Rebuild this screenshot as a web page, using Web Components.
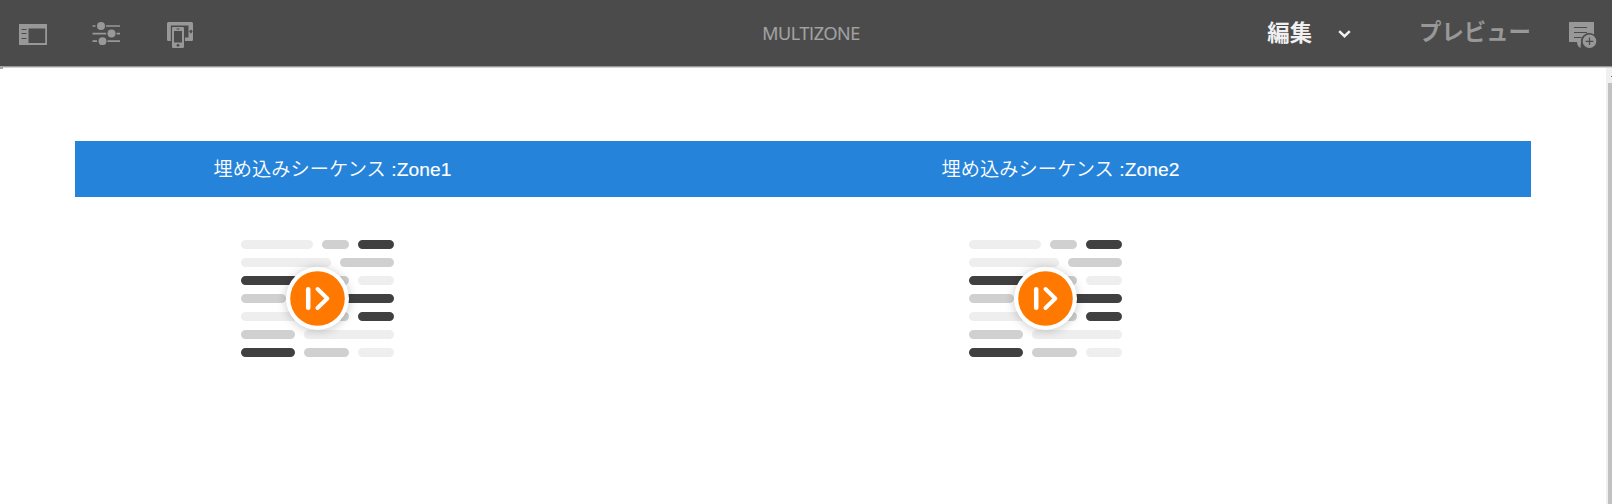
<!DOCTYPE html>
<html lang="ja">
<head>
<meta charset="utf-8">
<title>MULTIZONE</title>
<style>
html,body{margin:0;height:100%;overflow:hidden;background:#fff}
body{font-family:"Liberation Sans","Noto Sans CJK JP",sans-serif}
</style>
</head>
<body>
<editor-app></editor-app>
<script>
const define = (name, html) => customElements.define(name, class extends HTMLElement {
  constructor() {
    super();
    this.attachShadow({mode: 'open'}).innerHTML = html;
  }
});

define('icon-panel', `<style>:host{display:block;width:28px;height:21px}svg{display:block}</style>
<svg width="28" height="21"><path fill="#989898" fill-rule="evenodd" d="M0 0H28V21H0ZM9.5 4.5V19H26.2V4.5Z"/><path stroke="#4b4b4b" stroke-width="1" d="M2.5 5.5H7.5M2.5 9.5H7.5M2.5 14.5H7.5"/></svg>`);

define('icon-sliders', `<style>:host{display:block;width:28px;height:23px}svg{display:block}</style>
<svg width="28" height="23" fill="#989898"><path stroke="#989898" stroke-width="1.7" d="M.5 4H3.5M14 4H28M.5 11.6H14.2M24.5 11.6H28M.5 19.2H5M15.5 19.2H28"/><circle cx="9" cy="4" r="4"/><circle cx="19.5" cy="11.6" r="4"/><circle cx="10.5" cy="19.2" r="4"/></svg>`);

define('icon-devices', `<style>:host{display:block;width:26px;height:26px}svg{display:block}</style>
<svg width="26" height="26"><path fill="#989898" fill-rule="evenodd" d="M1.5 0H24.5Q26 0 26 1.5V17.5Q26 19 24.5 19H18V15.5H21.5V3.5H3.8V19H1.5Q0 19 0 17.5V1.5Q0 0 1.5 0Z"/><path fill="#4b4b4b" d="M22 9.5l2-2 1.7 2-1.7 2Z"/><path fill="#989898" fill-rule="evenodd" d="M6.3 5H15.7Q17 5 17 6.3V24.7Q17 26 15.7 26H6.3Q5 26 5 24.7V6.3Q5 5 6.3 5ZM7 9V20.5H15V9Z"/><path stroke="#4b4b4b" d="M9.5 7H12.5"/><circle cx="11" cy="23.3" r="1.4" fill="#4b4b4b"/></svg>`);

define('icon-note', `<style>:host{display:block;width:28px;height:27px}svg{display:block}</style>
<svg width="28" height="27"><path fill="#989898" d="M0 0H25V13A8 8 0 0 0 12 20L11.5 26Q8 24 8 20H0Z"/><path stroke="#4b4b4b" stroke-width="1.1" d="M5 5.5H18M5 10.5H18M5 15.5H12.5"/><circle cx="20.5" cy="19.3" r="8" fill="#4b4b4b"/><circle cx="20.5" cy="19.3" r="6.8" fill="#989898"/><path stroke="#4b4b4b" stroke-width="1.2" d="M16.7 19.3H24.3M20.5 15.5V23.1"/></svg>`);

define('icon-chevron', `<style>:host{display:block;width:13px;height:8px}svg{display:block}</style>
<svg width="13" height="8"><path d="M1.2 1.2L6.5 6.2 11.8 1.2" fill="none" stroke="#f0f0f0" stroke-width="2.5"/></svg>`);

define('tool-bar', `<style>
:host{display:grid;grid-template-columns:1fr auto 1fr;height:66px;background:#4b4b4b;border-bottom:1px solid #989898;box-shadow:0 1px #d2d2d2;box-sizing:content-box;position:relative}
:host::after{content:"";position:absolute;left:0;top:66px;width:3px;height:3px;background:#a5a5a5}
.left{display:flex;align-items:flex-start;padding-left:19px}
icon-panel{margin-top:24px}
icon-sliders{margin:22px 0 0 45px}
icon-devices{margin:22px 0 0 47px}
.title{font:18px/24px "Open Sans",sans-serif;letter-spacing:-.45px;color:#a3a3a3;-webkit-text-stroke:.2px #a3a3a3;margin:21px -5px 0 5px}
.right{display:flex;justify-content:flex-end;padding-right:15px}
.label{font:bold 22.4px/32px "Noto Sans CJK JP",sans-serif;margin-top:15px;white-space:nowrap}
.edit{color:#f0f0f0}.preview{color:#989898;margin:14px 0 0 68px}
icon-chevron{margin:30px 0 0 26px}
icon-note{margin:22px 0 0 38px}
</style>
<div class="left"><icon-panel></icon-panel><icon-sliders></icon-sliders><icon-devices></icon-devices></div>
<div class="title">MULTIZONE</div>
<div class="right"><span class="label edit">編集</span><icon-chevron></icon-chevron><span class="label preview">プレビュー</span><icon-note></icon-note></div>`);

define('sequence-art', `<style>:host{display:block;width:153px;height:117px}svg{display:block;overflow:visible}circle.ring{filter:drop-shadow(0 1px 5px rgba(0,0,0,.22))}</style>
<svg width="153" height="117" stroke-width="9" stroke-linecap="round" fill="none">
<path stroke="#eee" d="M4.5 4.5H67.5M4.5 22.5H85.5M121.5 40.5H148.5M4.5 76.5H67.5M67.5 94.5H148.5M121.5 112.5H148.5"/>
<path stroke="#d0d0d0" d="M85.5 4.5H103.5M103.5 22.5H148.5M85.5 40.5H103.5M4.5 58.5H40.5M85.5 76.5H103.5M4.5 94.5H49.5M67.5 112.5H103.5"/>
<path stroke="#404040" d="M121.5 4.5H148.5M4.5 40.5H67.5M94.5 58.5H148.5M121.5 76.5H148.5M4.5 112.5H49.5"/>
<circle class="ring" cx="76.5" cy="58.5" r="31.5" fill="#fff"/><circle cx="76.5" cy="58.5" r="27.3" fill="#ff7800"/>
<path stroke="#fff" stroke-width="4.5" d="M67.2 49.2V67.8"/><path stroke="#fff" stroke-width="4" stroke-linejoin="round" d="M76.5 49L86.3 58.5 76.5 68"/>
</svg>`);

define('zone-column', `<style>
:host{display:block;flex:1}
header{height:56px;box-sizing:border-box;padding:1px 0 0 138.5px;background:#2683da;color:#fff;font-size:19.2px;font-weight:350;letter-spacing:.07px;line-height:56px;white-space:nowrap}
::slotted(b){font-weight:400;-webkit-text-stroke:.15px #fff}
sequence-art{margin:43px 0 0 166px}
</style><header><slot></slot></header><sequence-art></sequence-art>`);

define('scroll-rail', `<style>:host{display:flex;flex-direction:column;width:6px;background:#f0f0f0}
i{display:block;width:1px;height:1px;background:#777;margin:9px 0 0 5px}
b{display:block;flex:1;margin:6px 0 0 2px;background:#c1c1c1}</style><i></i><b></b>`);

define('editor-app', `<style>
:host{display:flex;flex-direction:column;width:1612px;height:504px}
main{flex:1;display:flex;justify-content:space-between}
.zones{display:flex;width:1456px;padding:74px 0 0 75px}
</style><tool-bar></tool-bar><main><div class="zones"><zone-column>埋め込みシーケンス <b>:Zone1</b></zone-column><zone-column>埋め込みシーケンス <b>:Zone2</b></zone-column></div><scroll-rail></scroll-rail></main>`);
</script>
</body>
</html>
